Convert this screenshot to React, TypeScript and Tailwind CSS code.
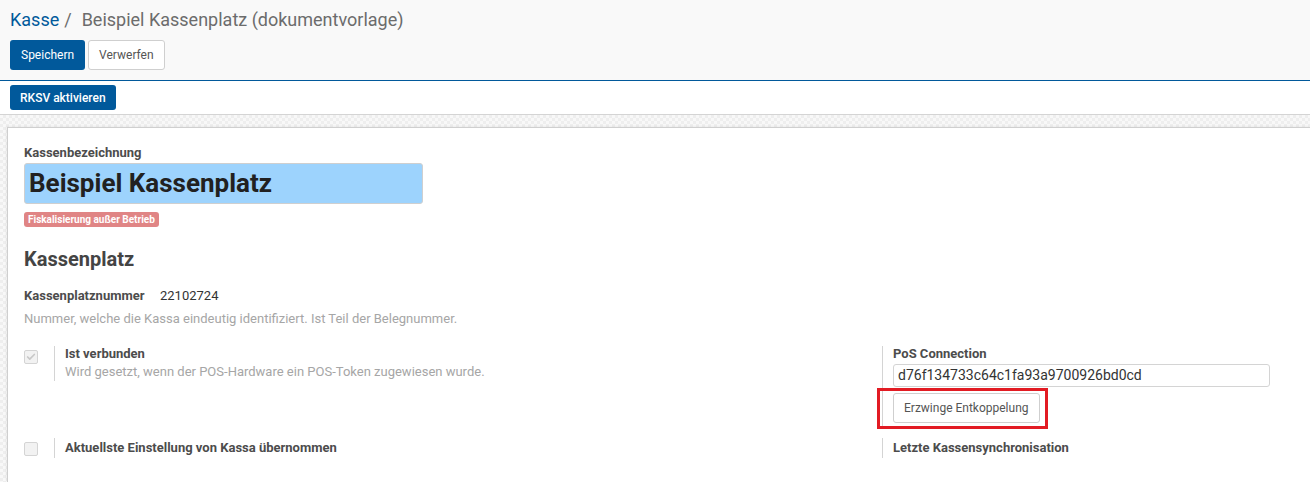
import { Check } from 'lucide-react';

function Checkbox({ checked }: { checked?: boolean }) {
  return (
    <div className="flex h-[14px] w-[14px] items-center justify-center rounded-[2px] border border-[#d4d4d4] bg-[#f2f2f2]">
      {checked && <Check className="h-[10px] w-[10px] text-[#c8c8c8]" strokeWidth={4} />}
    </div>
  );
}

export default function App() {
  return (
    <div className="min-h-[483px] bg-white font-['Roboto',sans-serif] text-[13px] text-[#4c4c4c]">
      {/* Kopfbereich */}
      <div className="border-b border-[#01599b] bg-[#f9f9f9] px-[10px] pt-[8px] pb-[10px]">
        <div className="flex items-center text-[18px] leading-[24px]">
          <span className="text-[#01599b]">Kasse</span>
          <span className="ml-[5px] text-[#6c6c6c]">/</span>
          <span className="ml-[10px] text-[#6c6c6c]">Beispiel Kassenplatz (dokumentvorlage)</span>
        </div>
        <div className="mt-[8px] flex gap-[3px]">
          <button className="h-[30px] rounded-[3px] bg-[#01599b] px-[11px] text-[12px] text-white">Speichern</button>
          <button className="h-[30px] rounded-[3px] border border-[#cfcfcf] bg-white px-[10px] text-[12px] text-[#555]">
            Verwerfen
          </button>
        </div>
      </div>

      {/* Statusleiste */}
      <div className="bg-white px-[10px] pt-[4px] pb-[4px]">
        <button className="h-[25px] rounded-[3px] bg-[#01599b] px-[10px] text-[12px] font-medium text-white">
          RKSV aktivieren
        </button>
      </div>

      {/* Formular */}
      <div className="border-t border-[#d4d4d4] bg-[repeating-conic-gradient(#eeeeee_0_25%,#f8f8f8_0_50%)] bg-[length:6px_6px] pt-[12px] pl-[7px]">
        <div className="border-t border-l border-[#cfcfcf] bg-white pt-[17px] pl-[16px] pb-[24px] shadow-[-1px_-1px_2px_rgba(0,0,0,0.05)]">
          <div className="font-bold leading-[16px] text-[#4c4c4c]">Kassenbezeichnung</div>
          <div className="mt-[2px] flex h-[41px] w-[399px] items-center rounded-[3px] border border-[#cfcfcf] bg-[#9dd3fd] px-[4px] text-[26px] font-bold text-[#212121]">
            Beispiel Kassenplatz
          </div>
          <div className="mt-[8px] inline-block rounded-[3px] bg-[#e08585] px-[4px] text-[10px] font-bold leading-[15px] text-white">
            Fiskalisierung außer Betrieb
          </div>

          <h2 className="mt-[17px] text-[20px] font-bold leading-[26px] text-[#444]">Kassenplatz</h2>

          <div className="mt-[15px] flex items-center leading-[18px]">
            <span className="w-[136px] font-bold text-[#4c4c4c]">Kassenplatznummer</span>
            <span className="text-[#333]">22102724</span>
          </div>
          <div className="mt-[5px] leading-[18px] text-[#a6a6a6]">
            Nummer, welche die Kassa eindeutig identifiziert. Ist Teil der Belegnummer.
          </div>

          <div className="mt-[18px] grid grid-cols-[858px_1fr]">
            <div className="flex">
              <div className="w-[30px] pt-[4px]">
                <Checkbox checked />
              </div>
              <div className="h-[35px] border-l border-[#d4d4d4] pl-[10px]">
                <div className="font-bold leading-[16px] text-[#4c4c4c]">Ist verbunden</div>
                <div className="mt-[2px] leading-[16px] text-[#a6a6a6]">
                  Wird gesetzt, wenn der POS-Hardware ein POS-Token zugewiesen wurde.
                </div>
              </div>
            </div>
            <div className="border-l border-[#d4d4d4] pl-[10px] pb-[3px]">
              <div className="font-bold leading-[16px] text-[#4c4c4c]">PoS Connection</div>
              <div className="mt-[2px] flex h-[23px] w-[377px] items-center rounded-[3px] border border-[#d4d4d4] bg-white px-[4px] text-[14px] text-[#333]">
                d76f134733c64c1fa93a9700926bd0cd
              </div>
              <div className="relative mt-[6px] w-fit">
                <button className="h-[30px] rounded-[3px] border border-[#cfcfcf] bg-white px-[10px] text-[12px] text-[#555]">
                  Erzwinge Entkoppelung
                </button>
                <div className="pointer-events-none absolute top-[-5px] right-[-8px] bottom-[-6px] left-[-16px] border-[3px] border-[#e21b23]" />
              </div>
            </div>
          </div>

          <div className="mt-[12px] grid grid-cols-[858px_1fr]">
            <div className="flex">
              <div className="w-[30px] pt-[4px]">
                <Checkbox />
              </div>
              <div className="h-[20px] border-l border-[#d4d4d4] pl-[10px] pt-[2px]">
                <div className="font-bold leading-[16px] text-[#4c4c4c]">Aktuellste Einstellung von Kassa übernommen</div>
              </div>
            </div>
            <div className="h-[20px] border-l border-[#d4d4d4] pl-[10px] pt-[2px]">
              <div className="font-bold leading-[16px] text-[#4c4c4c]">Letzte Kassensynchronisation</div>
            </div>
          </div>
        </div>
      </div>
    </div>
  );
}
